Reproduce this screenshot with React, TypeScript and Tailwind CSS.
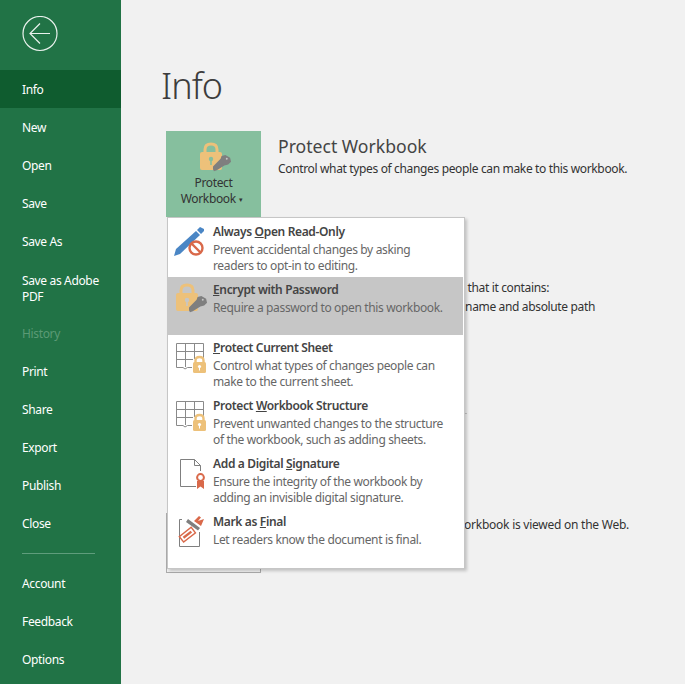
import type { ReactNode } from "react";

const navTop = ["Info", "New", "Open", "Save", "Save As"];
const navMiddle = ["Print", "Share", "Export", "Publish", "Close"];
const navBottom = ["Account", "Feedback", "Options"];

function NavItem({ label, active, disabled }: { label: ReactNode; active?: boolean; disabled?: boolean }) {
  return (
    <div
      className={`flex h-[38px] items-center pt-[2px] pl-[22px] text-[12px] tracking-[-0.35px] ${active ? "bg-[#0f5c2f]" : ""} ${
        disabled ? "text-[#5b9a75]" : "text-white"
      }`}
    >
      {label}
    </div>
  );
}

function KeyShape({ x, y, scale }: { x: number; y: number; scale: number }) {
  return (
    <g transform={`translate(${x} ${y}) scale(${scale})`} fill="#7f7f7f">
      <path d="M0 15 L0 12 L8 4 L9 1 L13 0 L18 3 L19 7 L16 10 L12 11 L4 16 L1 17 Z" />
      <circle cx="14.5" cy="4" r="1" fill="#c6c6c6" />
    </g>
  );
}

function LockIcon({ className, bg }: { className: string; bg: string }) {
  return (
    <svg viewBox="0 0 36 36" className={className}>
      <path d="M9 13 V9.5 C9 5.5 11.5 4 15 4 C18.5 4 21 5.5 21 9.5 V13" fill="none" stroke="#edc17a" strokeWidth="3" />
      <rect x="4" y="12" width="22" height="18" rx="2" fill="#edc17a" />
      <circle cx="15" cy="19" r="2.2" fill={bg} />
      <rect x="14.2" y="20" width="1.6" height="5" fill={bg} />
      <KeyShape x={17} y={15} scale={0.95} />
    </svg>
  );
}

function PenIcon() {
  return (
    <svg viewBox="0 0 36 36" className="mt-1 h-9 w-9 shrink-0">
      <path d="M2 33 L4 26 L24 8 L28 12 L8 31 Z" fill="#4a86c5" />
      <path d="M25 7 L28 4 L32 6 L32 8 L29 11 Z" fill="#4a86c5" />
      <circle cx="24" cy="25" r="6.5" fill="white" stroke="#d9694a" strokeWidth="2.4" />
      <path d="M19.5 20.5 L28.5 29.5" stroke="#d9694a" strokeWidth="2.4" />
    </svg>
  );
}

function SheetIcon() {
  return (
    <svg viewBox="0 0 36 36" className="mt-1 h-9 w-9 shrink-0">
      <path
        d="M4.5 4.5 H31.5 V20 M4.5 4.5 V28.5 H11 L13 30 L15.5 28.5 H20 M4.5 12.5 H31.5 M4.5 20.5 H21 M13.5 4.5 V28 M22.5 4.5 V20"
        fill="none"
        stroke="#8a8a8a"
        strokeWidth="1"
      />
      <path d="M23.5 24 V21.5 C23.5 19 25 18 27.5 18 C30 18 31.5 19 31.5 21.5 V24" fill="none" stroke="#edc17a" strokeWidth="2.4" />
      <rect x="21" y="23" width="13" height="11" rx="1.5" fill="#edc17a" />
      <circle cx="27.5" cy="27.5" r="1.6" fill="white" />
      <rect x="27" y="27.5" width="1" height="4" fill="white" />
    </svg>
  );
}

function SignatureIcon() {
  return (
    <svg viewBox="0 0 36 36" className="mt-1 h-9 w-9 shrink-0">
      <path d="M8.5 4.5 H22.5 L28.5 10.5 V16 M22.5 4.5 V10.5 H28.5 M24 31.5 H8.5 V4.5" fill="none" stroke="#7f7f7f" strokeWidth="1" />
      <path d="M25 26 L25 34 L28.5 31.5 L32 34 L32 26 Z" fill="#d9694a" />
      <circle cx="28.5" cy="22.5" r="3.4" fill="white" stroke="#d9694a" strokeWidth="2" />
    </svg>
  );
}

function FinalIcon() {
  return (
    <svg viewBox="0 0 36 36" className="mt-1 h-9 w-9 shrink-0">
      <path d="M10 6.5 H7.5 V33.5 H27.5 V19" fill="none" stroke="#7f7f7f" strokeWidth="1" />
      <path d="M16 6 L28 15 L26 17.5 L14 9 Z" fill="#7f7f7f" />
      <path d="M22 8 L27 3 L29 4.5 L26 8 L32 6 L29 13 Z" fill="#d9694a" />
      <g transform="rotate(-38 15 22)">
        <rect x="8" y="18.5" width="15" height="7" fill="none" stroke="#d9694a" strokeWidth="1.4" />
        <rect x="10.5" y="20.8" width="10" height="2.4" fill="#d9694a" />
      </g>
    </svg>
  );
}

function MenuItem({
  icon,
  title,
  lines,
  active,
}: {
  icon: ReactNode;
  title: ReactNode;
  lines: string[];
  active?: boolean;
}) {
  return (
    <div className={`flex h-[58px] pl-1 whitespace-nowrap ${active ? "bg-[#c6c6c6]" : ""}`}>
      {icon}
      <div className="ml-[5px] pt-[5px] text-[12px] leading-4 tracking-[-0.35px]">
        <div className="mb-[2px] font-semibold text-[#444444]">{title}</div>
        {lines.map((l) => (
          <div key={l} className="text-[#666666]">
            {l}
          </div>
        ))}
      </div>
    </div>
  );
}

export default function App() {
  return (
    <div
      className="flex h-[684px] w-[685px] overflow-hidden bg-[#f1f1f1]"
      style={{ fontFamily: '"Noto Sans", sans-serif' }}
    >
      <aside className="flex w-[121px] shrink-0 flex-col bg-[#217346]">
        <div className="h-[70px] pt-4 pl-[22px]">
          <svg viewBox="0 0 36 36" className="h-9 w-9">
            <circle cx="18" cy="17.5" r="17" fill="none" stroke="white" strokeWidth="1.2" opacity="0.9" />
            <path d="M8 17.5 H28 M18 7.5 L8 17.5 L18 27.5" fill="none" stroke="white" strokeWidth="1.2" opacity="0.9" />
          </svg>
        </div>
        {navTop.map((n, i) => (
          <NavItem key={n} label={n} active={i === 0} />
        ))}
        <div className="flex h-[54px] items-center pt-[4px] pl-[22px] text-[12px] leading-4 tracking-[-0.35px] text-white">
          Save as Adobe
          <br />
          PDF
        </div>
        <NavItem label="History" disabled />
        {navMiddle.map((n) => (
          <NavItem key={n} label={n} />
        ))}
        <div className="mt-[11px] mb-[10px] ml-[22px] h-px w-[73px] bg-[#5f9d7c]" />
        {navBottom.map((n) => (
          <NavItem key={n} label={n} />
        ))}
      </aside>

      <main className="relative flex-1 overflow-hidden pl-[45px] text-[#333333]">
        <h1 className="-ml-[5px] pt-[61px] text-[36px] leading-[50px] font-light tracking-[-1px] text-[#3d3d3d]">Info</h1>
        <section className="mt-[20px] flex">
          <div className="flex h-[86px] w-[95px] shrink-0 flex-col items-center bg-[#86bf9e]">
            <LockIcon className="mt-[9px] h-9 w-9" bg="#86bf9e" />
            <div className="-mt-[1px] text-center text-[12px] leading-4 tracking-[-0.35px] text-[#333333]">
              Protect
              <br />
              Workbook <span className="pr-[4px] align-middle text-[7px]">▾</span>
            </div>
          </div>
          <div className="ml-[17px] whitespace-nowrap">
            <h2 className="pt-[3px] text-[17.6px] leading-6 text-[#444444]">Protect Workbook</h2>
            <p className="mt-[3px] text-[12px] leading-4 tracking-[-0.35px] text-[#333333]">
              Control what types of changes people can make to this workbook.
            </p>
          </div>
        </section>
        <div className="mt-[63px] w-[383px] text-right text-[12px] leading-4 tracking-[-0.35px] whitespace-nowrap">
          that it contains:
        </div>
        <div className="mt-[3px] w-[429px] text-right text-[12px] leading-4 tracking-[-0.35px] whitespace-nowrap">
          name and absolute path
        </div>
        <div className="mt-[98px] ml-[112px] h-px w-[189px] bg-[#c6c6c6]" />
        <section className="mt-[99px] flex">
          <div className="h-[60px] w-[95px] shrink-0 border border-[#ababab]" />
          <div className="mt-[4px] w-[368px] text-right text-[12px] leading-4 tracking-[-0.25px] whitespace-nowrap">
            workbook is viewed on the Web.
          </div>
        </section>

        <div className="absolute top-[217px] left-[46px] h-[352px] w-[298px] border border-[#c6c6c6] bg-white pt-[1px] pr-[1px] shadow-[2px_2px_3px_rgba(0,0,0,0.2)]">
          <MenuItem
            icon={<PenIcon />}
            title={
              <>
                Always <u>O</u>pen Read-Only
              </>
            }
            lines={["Prevent accidental changes by asking", "readers to opt-in to editing."]}
          />
          <MenuItem
            active
            icon={<LockIcon className="mt-1 h-9 w-9 shrink-0" bg="#c6c6c6" />}
            title={
              <>
                <u>E</u>ncrypt with Password
              </>
            }
            lines={["Require a password to open this workbook."]}
          />
          <MenuItem
            icon={<SheetIcon />}
            title={
              <>
                <u>P</u>rotect Current Sheet
              </>
            }
            lines={["Control what types of changes people can", "make to the current sheet."]}
          />
          <MenuItem
            icon={<SheetIcon />}
            title={
              <>
                Protect <u>W</u>orkbook Structure
              </>
            }
            lines={["Prevent unwanted changes to the structure", "of the workbook, such as adding sheets."]}
          />
          <MenuItem
            icon={<SignatureIcon />}
            title={
              <>
                Add a Digital <u>S</u>ignature
              </>
            }
            lines={["Ensure the integrity of the workbook by", "adding an invisible digital signature."]}
          />
          <MenuItem
            icon={<FinalIcon />}
            title={
              <>
                Mark as <u>F</u>inal
              </>
            }
            lines={["Let readers know the document is final."]}
          />
        </div>
      </main>
    </div>
  );
}
